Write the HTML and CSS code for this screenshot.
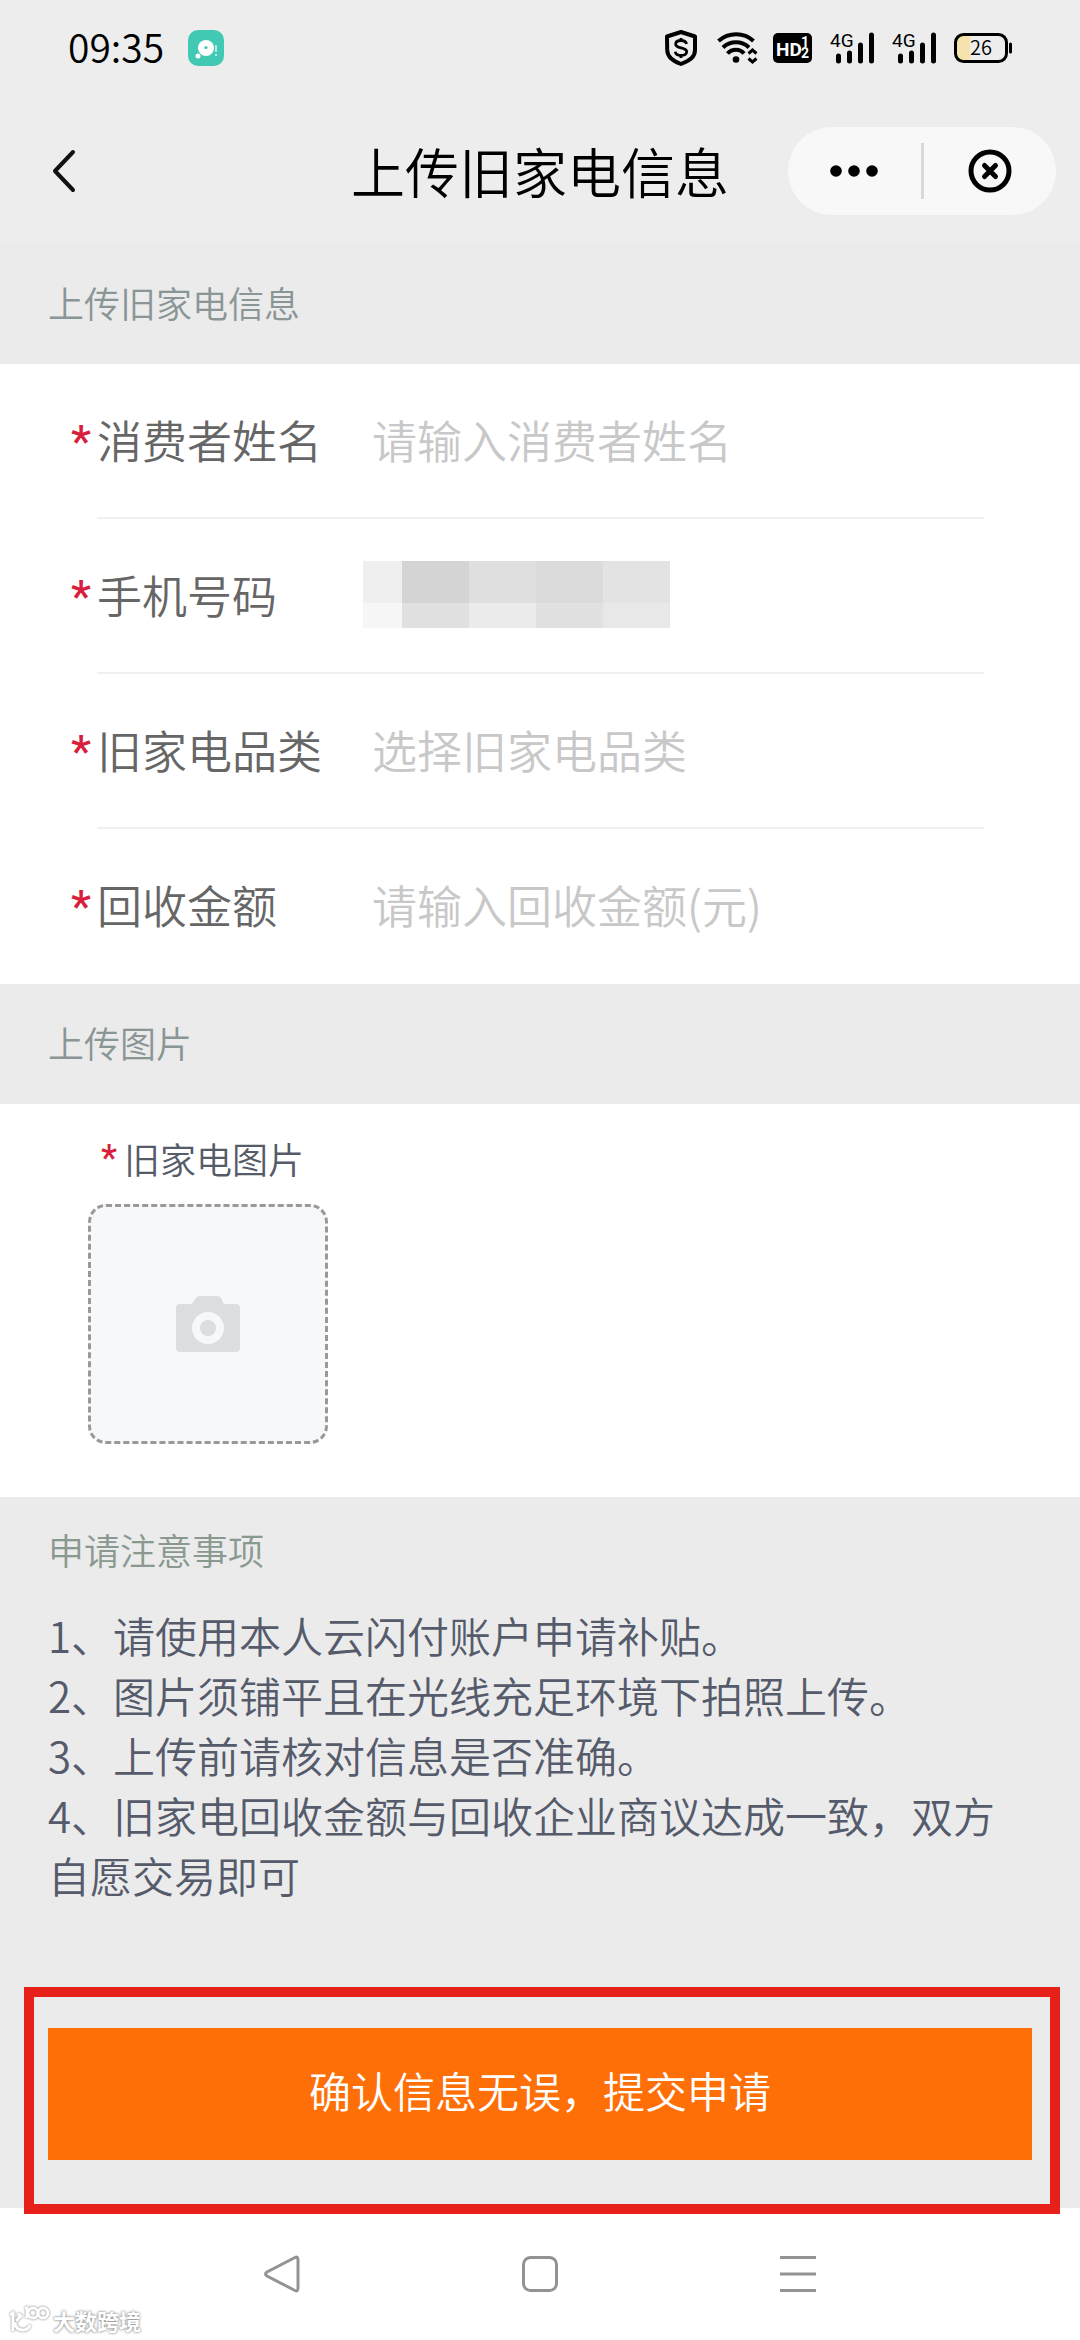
FILE: index.html
```html
<!DOCTYPE html>
<html lang="zh-CN">
<head>
<meta charset="utf-8">
<meta name="viewport" content="width=device-width, initial-scale=1">
<title>上传旧家电信息</title>
<link rel="stylesheet" href="styles.css">
</head>
<body>
<div class="page">
  <div class="status-bar">
    <span class="status-time">09:35</span>
    <svg class="app-badge" width="36" height="36" viewBox="0 0 36 36" aria-hidden="true">
      <rect width="36" height="36" rx="10" fill="#41c9b4"/>
      <circle cx="18" cy="18" r="8" fill="#fff"/>
      <circle cx="18" cy="17.500" r="1.600" fill="#41c9b4"/>
      <circle cx="10" cy="26" r="2.500" fill="#fff"/>
      <path d="M28 15v7M28 24v2" stroke="#b5ebe2" stroke-width="2"/>
    </svg>
    <div class="status-icons">
      <svg width="32" height="36" viewBox="0 0 32 36" aria-hidden="true">
        <path d="M16 2 30 6.500V20c0 7-5 10.500-14 14C7 30.500 2.500 27 2.200 20L2 6.500Z" fill="none" stroke="#000" stroke-width="4" stroke-linejoin="round"/>
        <path d="M21.500 14c-.5-2.500-3-3.500-5.500-3.500-3 0-5.300 1.300-5.300 3.700 0 5 11 2.500 11 7.600 0 2.400-2.600 3.700-5.500 3.700-3 0-5.500-1.300-6-3.800M16 8v3M16 25v3" fill="none" stroke="#000" stroke-width="2.800"/>
      </svg>
      <svg width="40" height="32" viewBox="0 0 40 32" aria-hidden="true">
        <g fill="none" stroke="#000" stroke-width="4">
          <path d="M1.500 9C11.500 0 27 0 36.500 9"/>
          <path d="M6 15.500C13 8.500 25 8.500 32 15.500"/>
          <path d="M10.500 21.500C15 16.500 23 16.500 27 21.500"/>
        </g>
        <circle cx="19" cy="27.500" r="3.300"/>
        <path d="M31.500 21.500l4-3.500 4 3.500M31.500 26.500l4 3.500 4-3.500" fill="none" stroke="#000" stroke-width="3"/>
      </svg>
      <svg class="gap-m" width="39" height="30" viewBox="0 0 39 30" aria-hidden="true">
        <rect width="39" height="30" rx="5"/>
        <text class="hd-text" x="3" y="23">HD</text>
        <text class="hd-small" x="28" y="14">1</text>
        <text class="hd-small" x="28" y="25">2</text>
      </svg>
      <svg class="gap-l" width="44" height="30" viewBox="0 0 44 30" aria-hidden="true">
        <text class="net-text" x="0" y="14">4G</text>
        <path d="M8.500 23v5M19.500 20v8M30.500 12v16M41.500 2v26" stroke="#000" stroke-width="5" stroke-linecap="round"/>
      </svg>
      <svg class="gap-l" width="44" height="30" viewBox="0 0 44 30" aria-hidden="true">
        <text class="net-text" x="0" y="14">4G</text>
        <path d="M8.500 23v5M19.500 20v8M30.500 12v16M41.500 2v26" stroke="#000" stroke-width="5" stroke-linecap="round"/>
      </svg>
      <svg class="gap-l" width="58" height="30" viewBox="0 0 58 30" aria-hidden="true">
        <path d="M9 3h7v24H9c-4 0-6-2-6-6V9c0-4 2-6 6-6Z" fill="#f5e2ac"/>
        <rect x="1.500" y="1.500" width="51" height="27" rx="8" fill="none" stroke="#000" stroke-width="3"/>
        <path d="M56.500 11v8" stroke="#000" stroke-width="3" stroke-linecap="round"/>
        <text class="battery-text" x="27" y="22" text-anchor="middle">26</text>
      </svg>
    </div>
  </div>

  <header class="title-bar">
    <button class="back" type="button" aria-label="返回">
      <svg width="24" height="44" viewBox="0 0 24 44"><path d="M21 3 3 22l18 19" fill="none" stroke="#111" stroke-width="4" stroke-linecap="round" stroke-linejoin="round"/></svg>
    </button>
    <h1 class="title">上传旧家电信息</h1>
    <div class="capsule">
      <button class="capsule-button" type="button" aria-label="更多">
        <svg width="48" height="12" viewBox="0 0 48 12"><circle cx="6" cy="6" r="5.800"/><circle cx="24" cy="6" r="5.800"/><circle cx="42" cy="6" r="5.800"/></svg>
      </button>
      <span class="capsule-line"></span>
      <button class="capsule-button" type="button" aria-label="关闭">
        <svg width="44" height="44" viewBox="0 0 44 44"><circle cx="22" cy="22" r="19" fill="none" stroke="#000" stroke-width="5"/><path d="m16.500 16.500 11 11m0-11-11 11" stroke="#000" stroke-width="5" stroke-linecap="round"/></svg>
      </button>
    </div>
  </header>

  <main>
    <form>
      <h2 class="section-title">上传旧家电信息</h2>
      <div class="fields">
        <div class="row">
          <span class="star">*</span>
          <div class="row-body">
            <label class="label" for="name">消费者姓名</label>
            <input class="input" id="name" type="text" placeholder="请输入消费者姓名">
          </div>
        </div>
        <div class="row">
          <span class="star">*</span>
          <div class="row-body">
            <label class="label" for="phone">手机号码</label>
            <div class="masked">
              <input class="input" id="phone" type="tel">
              <div class="mosaic">
                <i class="m1"></i><i class="m2"></i><i class="m3"></i><i class="m4"></i><i class="m5"></i>
                <i class="m6"></i><i class="m7"></i><i class="m8"></i><i class="m7"></i><i class="m9"></i>
              </div>
            </div>
          </div>
        </div>
        <div class="row">
          <span class="star">*</span>
          <div class="row-body">
            <label class="label" for="kind">旧家电品类</label>
            <select class="input select" id="kind"><option>选择旧家电品类</option></select>
          </div>
        </div>
        <div class="row">
          <span class="star">*</span>
          <div class="row-body">
            <label class="label" for="amount">回收金额</label>
            <input class="input" id="amount" type="text" inputmode="decimal" placeholder="请输入回收金额(元)">
          </div>
        </div>
      </div>

      <h2 class="section-title">上传图片</h2>
      <div class="upload">
        <div class="upload-label" id="photo-label"><span class="upload-star">*</span>旧家电图片</div>
        <button class="upload-box" type="button" aria-labelledby="photo-label">
          <svg width="64" height="56" viewBox="0 0 64 56">
            <path d="M4 8h12l4-6q1-2 4-2h17q3 0 4 2l3 6h12q4 0 4 4v40q0 4-4 4H4q-4 0-4-4V12q0-4 4-4Z" fill="#dcdddf"/>
            <circle cx="32" cy="32" r="12" fill="#dcdddf" stroke="#f7f8fa" stroke-width="8"/>
          </svg>
        </button>
      </div>

      <section class="notes">
        <h2 class="notes-title">申请注意事项</h2>
        <p class="note">1、请使用本人云闪付账户申请补贴。</p>
        <p class="note">2、图片须铺平且在光线充足环境下拍照上传。</p>
        <p class="note">3、上传前请核对信息是否准确。</p>
        <p class="note">4、旧家电回收金额与回收企业商议达成一致，双方自愿交易即可</p>
      </section>

      <div class="submit-frame">
        <button class="submit" type="submit">确认信息无误，提交申请</button>
      </div>
    </form>
  </main>

  <nav class="system-nav">
    <button class="nav-button" type="button" aria-label="系统返回">
      <svg width="36" height="38" viewBox="0 0 36 38"><path d="M31 2.500Q34 1 34 5v28q0 4-3 2.500L3 21q-3-2 0-4Z" fill="none" stroke="#939393" stroke-width="3"/></svg>
    </button>
    <button class="nav-button" type="button" aria-label="主屏幕">
      <svg width="36" height="38" viewBox="0 0 36 38"><rect x="1.500" y="2.500" width="33" height="33" rx="7" fill="none" stroke="#939393" stroke-width="3"/></svg>
    </button>
    <button class="nav-button" type="button" aria-label="最近任务">
      <svg width="36" height="38" viewBox="0 0 36 38"><path d="M0 2.500h36M0 19h36M0 35.500h36" stroke="#939393" stroke-width="3"/></svg>
    </button>
    <div class="watermark">
      <svg width="42" height="30" viewBox="0 0 42 30" aria-hidden="true">
        <g class="mark-logo" fill="none" stroke="#fff" stroke-width="3">
          <path d="M2 10 5 8v18M11 8v4M7 17c0 6 4 8 8 8 4 0 6-2 7-5M8 16l6-6M17 4l2-1v10"/>
          <circle cx="25" cy="8" r="5"/>
          <circle cx="35" cy="8" r="5"/>
        </g>
      </svg>
      <span>大数跨境</span>
    </div>
  </nav>
</div>
</body>
</html>
```
FILE: styles.css
```css
* { box-sizing: border-box; }

body {
  margin: 0;
  background: #fff;
  font-family: "Noto Sans CJK SC", "Noto Sans", sans-serif;
  font-weight: 350;
}

h1, h2, p { margin: 0; font-weight: inherit; }

svg { display: block; flex: none; overflow: visible; }

button {
  margin: 0;
  padding: 0;
  border: 0;
  background: none;
  font: inherit;
  cursor: pointer;
}

.page {
  min-height: 100vh;
  display: flex;
  flex-direction: column;
  background: #ebebeb;
}

/* Status bar */
.status-bar {
  display: flex;
  align-items: center;
  height: 96px;
  padding: 0 68px;
  background: #ededed;
}

.status-time {
  padding-bottom: 4px;
  font-size: 39px;
  line-height: 40px;
  color: #000;
}

.app-badge { margin-left: 24px; }

.status-icons {
  display: flex;
  align-items: center;
  gap: 20px;
  margin-left: auto;
}

.gap-m { margin-left: -4px; }
.gap-l { margin-left: -2px; }

.hd-text, .hd-small { fill: #fff; font-family: Roboto, sans-serif; font-weight: 700; }
.hd-text { font-size: 19px; }
.hd-small { font-size: 14px; }
.net-text { font-family: Roboto, sans-serif; font-size: 19px; font-weight: 400; }
.battery-text { font-size: 20px; }

/* Title bar */
.title-bar {
  display: grid;
  grid-template-columns: 1fr auto 1fr;
  align-items: center;
  height: 148px;
  padding: 2px 24px 0 52px;
  background: #ededed;
}

.title {
  margin-left: -28px;
  font-size: 54px;
  line-height: 64px;
  color: #000;
}

.back { justify-self: start; }

.capsule {
  display: flex;
  align-items: center;
  justify-self: end;
  width: 268px;
  height: 88px;
  border-radius: 44px;
  background: #f8f8f8;
}

.capsule-button {
  flex: 1;
  height: 88px;
  display: flex;
  align-items: center;
  justify-content: center;
}

.capsule-line {
  width: 3px;
  height: 56px;
  background: #d9d9d9;
}

/* Form */
.section-title {
  height: 120px;
  padding-left: 48px;
  font-size: 36px;
  line-height: 116px;
  color: #8a9596;
}

.fields { background: #fff; }

.row {
  display: flex;
  padding: 0 96px 0 71px;
}

.star {
  flex: none;
  width: 26px;
  font-family: Roboto, sans-serif;
  font-size: 45px;
  font-weight: 500;
  line-height: 155px;
  color: #d81e3a;
}

.row-body {
  flex: 1;
  display: flex;
  align-items: center;
  height: 155px;
  padding-bottom: 2px;
  border-bottom: 2px solid #f0f0f0;
}

.row:last-child .row-body { border-bottom-color: transparent; }

.label {
  flex: none;
  width: 266px;
  font-size: 45px;
  line-height: 64px;
  color: #666;
}

.input {
  flex: 1;
  width: 100%;
  min-width: 0;
  height: 68px;
  padding: 0 0 0 9px;
  border: 0;
  background: none;
  font: inherit;
  font-size: 45px;
  line-height: 64px;
  color: #c8c8c8;
  outline: none;
}

.input::placeholder { color: #c8c8c8; opacity: 1; }

.select { appearance: none; }

.masked { position: relative; flex: 1; }

.mosaic {
  position: absolute;
  top: 0;
  left: 0;
  display: grid;
  grid-template-columns: 39px repeat(4, 67px);
  grid-template-rows: 42px 25px;
}

.m1 { background: #efefef; }
.m2 { background: #d4d4d4; }
.m3 { background: #dfdfdf; }
.m4 { background: #dbdbdb; }
.m5 { background: #e3e3e3; }
.m6 { background: #f7f7f7; }
.m7 { background: #e1e1e1; }
.m8 { background: #ececec; }
.m9 { background: #e8e8e8; }

/* Photo upload */
.upload {
  padding: 30px 88px 53px;
  background: #fff;
}

.upload-label {
  display: flex;
  align-items: center;
  padding-left: 13px;
  font-size: 36px;
  line-height: 48px;
  color: #555b68;
}

.upload-star {
  width: 23px;
  font-family: Roboto, sans-serif;
  font-weight: 500;
  color: #d81e3a;
}

.upload-box {
  display: flex;
  align-items: center;
  justify-content: center;
  width: 240px;
  height: 240px;
  margin-top: 22px;
  border: 3px dashed #999;
  border-radius: 18px;
  background: #f7f8fa;
}

/* Notes */
.notes { padding: 28px 48px 82px; }

.notes-title {
  margin-bottom: 32px;
  font-size: 36px;
  line-height: 48px;
  color: #8a9990;
}

.note {
  font-size: 42px;
  line-height: 60px;
  color: #555b6b;
}

/* Submit */
.submit-frame {
  position: relative;
  z-index: 1;
  margin: 0 20px -6px 24px;
  padding: 31px 18px 44px 14px;
  border: 10px solid #e8201a;
}

.submit {
  width: 100%;
  height: 132px;
  padding-bottom: 8px;
  background: #ff6f08;
  font-size: 42px;
  line-height: 60px;
  color: #fff;
}

/* System navigation */
.system-nav {
  position: relative;
  flex: 1;
  display: flex;
  align-items: center;
  justify-content: center;
  gap: 222px;
  min-height: 132px;
  background: #fff;
}

.watermark {
  position: absolute;
  left: 8px;
  bottom: 4px;
  display: flex;
  align-items: center;
  gap: 3px;
  font-size: 22px;
  line-height: 32px;
  font-weight: 700;
  color: #fff;
  text-shadow: 0 0 3px #888, 0 0 2px #aaa;
}

.mark-logo { filter: drop-shadow(0 0 1px #777); }
```
